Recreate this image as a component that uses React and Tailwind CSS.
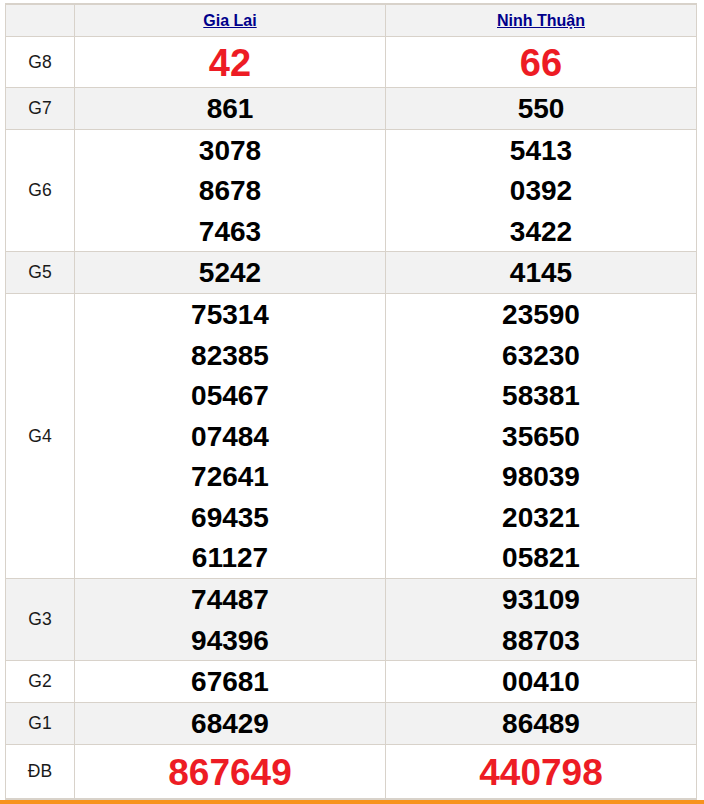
import React from "react";

const rows = [
  { label: "G8", h: "h-[51px]", a: ["42"], b: ["66"], big: true, bg: "bg-white" },
  { label: "G7", h: "h-[42px]", a: ["861"], b: ["550"], bg: "bg-[#f2f2f2]" },
  { label: "G6", h: "h-[122px]", a: ["3078", "8678", "7463"], b: ["5413", "0392", "3422"], bg: "bg-white" },
  { label: "G5", h: "h-[42px]", a: ["5242"], b: ["4145"], bg: "bg-[#f2f2f2]" },
  {
    label: "G4",
    h: "h-[285px]",
    a: ["75314", "82385", "05467", "07484", "72641", "69435", "61127"],
    b: ["23590", "63230", "58381", "35650", "98039", "20321", "05821"],
    bg: "bg-white",
  },
  { label: "G3", h: "h-[82px]", a: ["74487", "94396"], b: ["93109", "88703"], bg: "bg-[#f2f2f2]" },
  { label: "G2", h: "h-[42px]", a: ["67681"], b: ["00410"], bg: "bg-white" },
  { label: "G1", h: "h-[42px]", a: ["68429"], b: ["86489"], bg: "bg-[#f2f2f2]" },
  { label: "ĐB", h: "h-[54px]", a: ["867649"], b: ["440798"], db: true, bg: "bg-white" },
];

function NumCell({ nums, big, db }) {
  return (
    <div className="flex flex-col items-center justify-center overflow-hidden border-r border-b border-[#d8d2ca]">
      {nums.map((n, i) =>
        big ? (
          <div key={i} className="translate-y-px text-[38px] leading-[46px] font-bold text-[#ed1c24]">{n}</div>
        ) : db ? (
          <div key={i} className="translate-y-px text-[37px] leading-[46px] font-bold text-[#ed1c24]">{n}</div>
        ) : (
          <div key={i} className="translate-y-px text-[28px] leading-[40.5px] font-bold text-black">{n}</div>
        )
      )}
    </div>
  );
}

export default function App() {
  return (
    <div className="w-[704px] h-[804px] bg-white pt-[3px]" style={{ fontFamily: '"Liberation Sans", Arial, sans-serif' }}>
      <div className="ml-[5px] w-[692px] border-t-2 border-l border-[#d8d2ca]">
        <div className="grid grid-cols-[69px_311px_311px] h-[32px] bg-[#f2f2f2]">
          <div className="border-r border-b border-[#d8d2ca]"></div>
          <div className="flex items-center justify-center border-r border-b border-[#d8d2ca]">
            <a className="text-[16px] font-bold text-[#00008b] underline">Gia Lai</a>
          </div>
          <div className="flex items-center justify-center border-r border-b border-[#d8d2ca]">
            <a className="text-[16px] font-bold text-[#00008b] underline">Ninh Thuận</a>
          </div>
        </div>
        {rows.map((r) => (
          <div key={r.label} className={`grid grid-cols-[69px_311px_311px] ${r.h} ${r.bg}`}>
            <div className="flex items-center justify-center border-r border-b border-[#d8d2ca] text-[17.5px] text-[#1a1a1a]">
              {r.label}
            </div>
            <NumCell nums={r.a} big={r.big} db={r.db} />
            <NumCell nums={r.b} big={r.big} db={r.db} />
          </div>
        ))}
        <div className="h-px bg-[#d8d2ca]"></div>
      </div>
      <div className="h-[4px] bg-[#f7931e]"></div>
    </div>
  );
}
